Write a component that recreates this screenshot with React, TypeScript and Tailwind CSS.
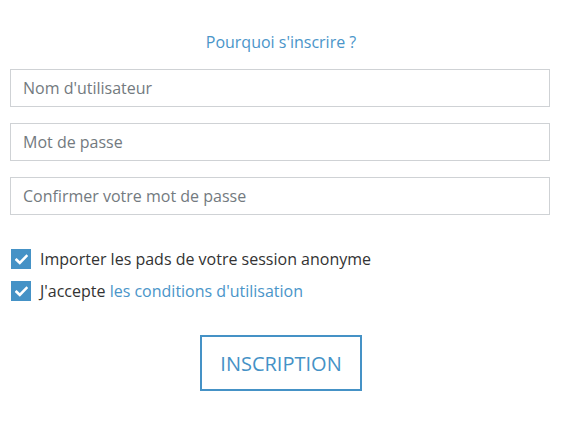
import React from "react";

function Check() {
  return (
    <span className="flex h-[20px] w-[20px] shrink-0 items-center justify-center bg-[#4592c6]">
      <svg width="13" height="11" viewBox="0 0 13 11" fill="none">
        <path d="M1.5 5.8 L4.8 9 L11.5 2" stroke="white" strokeWidth="2.6" strokeLinecap="square" />
      </svg>
    </span>
  );
}

export default function App() {
  return (
    <div className="w-[562px] h-[426px] bg-white px-[10px] pt-[31px]" style={{ fontFamily: '"Open Sans", sans-serif' }}>
      <div className="text-center text-[16px] leading-[22px] text-[#4a95c9]">Pourquoi s'inscrire ?</div>
      <div className="mt-[16px] flex flex-col gap-[16px]">
        {["Nom d'utilisateur", "Mot de passe", "Confirmer votre mot de passe"].map((p) => (
          <input
            key={p}
            placeholder={p}
            className="h-[38px] w-[540px] border border-[#cfd2d5] px-[12px] text-[16px] text-[#555] placeholder:text-[#737a80] outline-none"
          />
        ))}
      </div>
      <div className="mt-[34px] flex flex-col gap-[12px] pl-[1px]">
        <label className="flex items-center gap-[9px] text-[16px] leading-[20px] text-[#333]">
          <Check />
          <span>Importer les pads de votre session anonyme</span>
        </label>
        <label className="flex items-center gap-[9px] text-[16px] leading-[20px] text-[#333]">
          <Check />
          <span>
            J'accepte <span className="text-[#4a95c9]">les conditions d'utilisation</span>
          </span>
        </label>
      </div>
      <div className="mt-[34px] flex justify-center">
        <button className="h-[56px] w-[162px] border-2 border-[#4592c6] pt-[2px] text-[20px] text-[#4592c6]">INSCRIPTION</button>
      </div>
    </div>
  );
}
